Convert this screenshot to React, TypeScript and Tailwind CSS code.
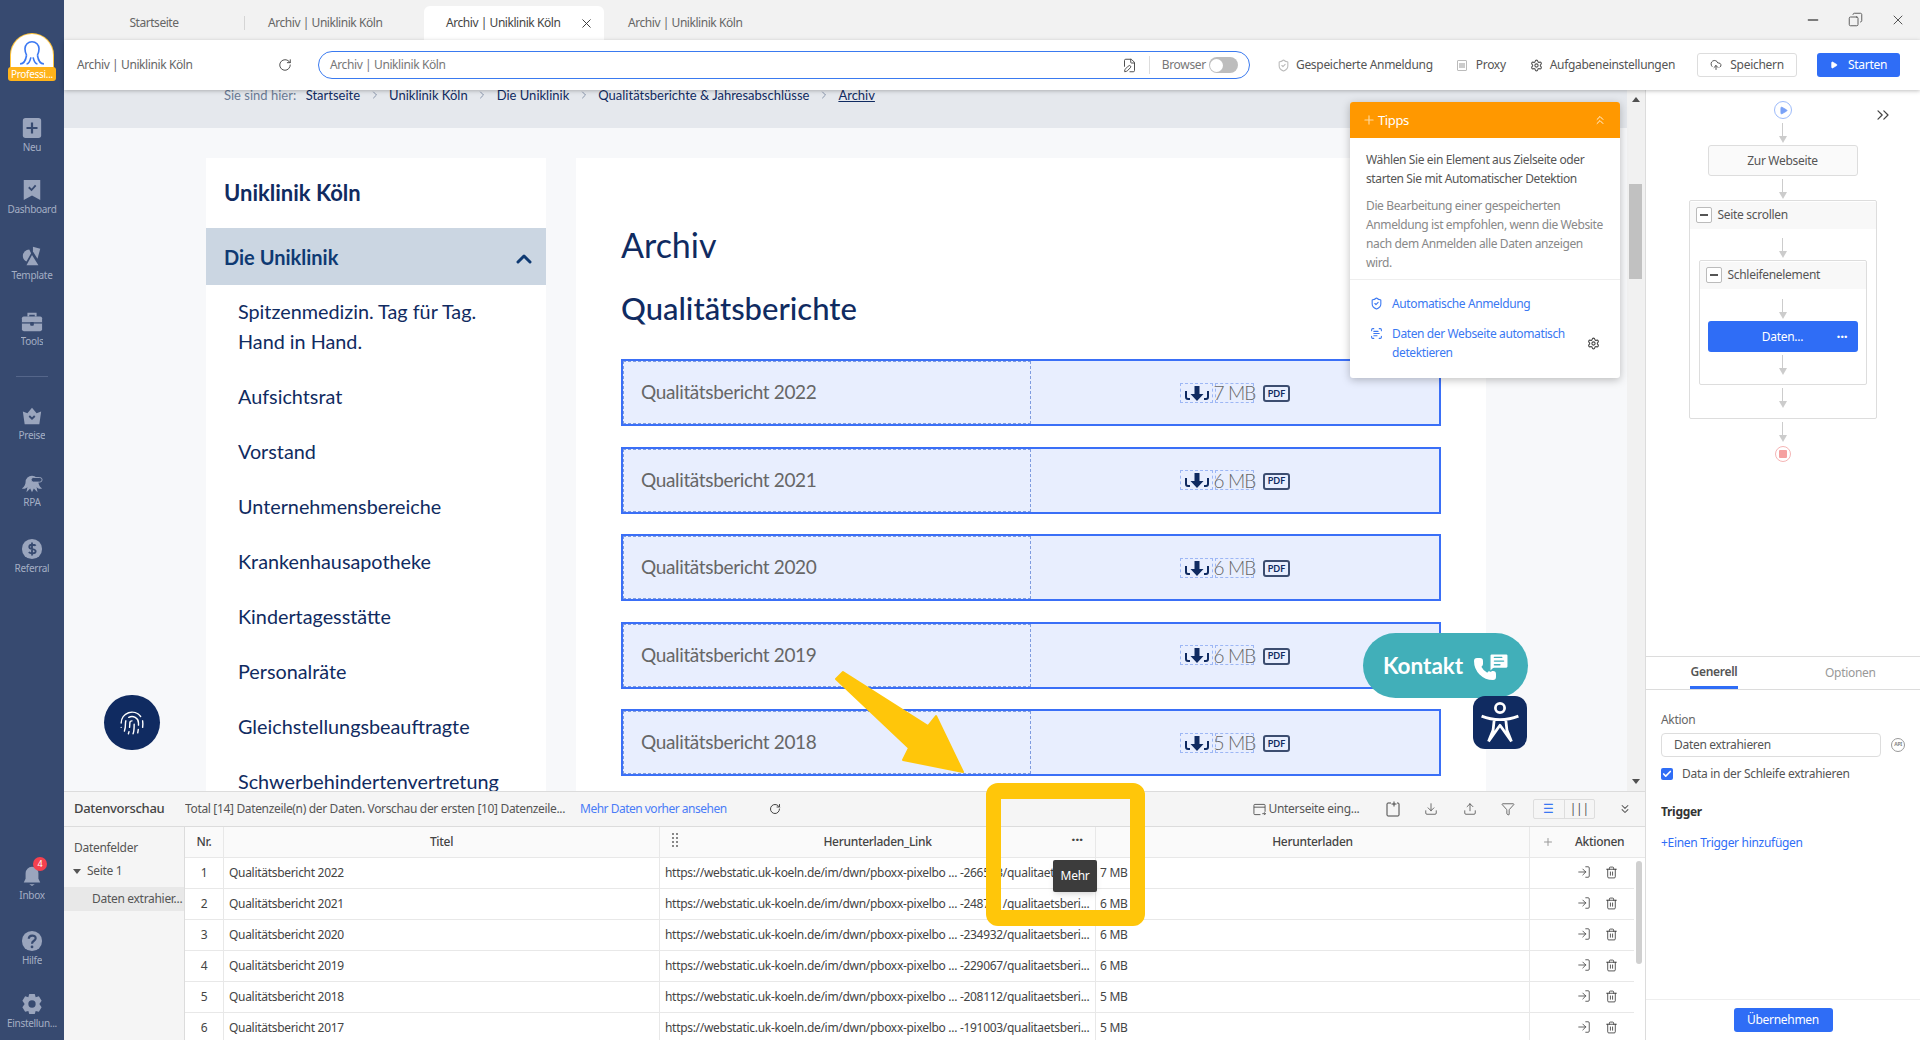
import {
  RotateCw,
  X,
  Minus,
  Copy,
  ShieldCheck,
  Settings,
  Play,
  ChevronsRight,
  ChevronsUp,
  ChevronsDown,
  ChevronUp,
  ChevronRight,
  CloudUpload,
  FilePen,
  Download,
  Upload,
  Plus,
  Check,
  Trash2,
  LogIn,
  Funnel,
  ScanText,
  Phone,
  MessageSquareText,
  Fingerprint,
} from 'lucide-react'

const navIconClass = 'w-[24px] h-[22px] text-[#9aa5bd]'

function NewIcon() {
  return (
    <svg viewBox="0 0 24 24" className={navIconClass}>
      <rect x="2" y="1" width="20" height="22" rx="3" fill="currentColor" />
      <path d="M12 6v12M6 12h12" stroke="#374a70" strokeWidth="2.4" />
    </svg>
  )
}

function BookmarkIcon() {
  return (
    <svg viewBox="0 0 24 24" className={navIconClass}>
      <path d="M3 1h18v22l-9-5-9 5z" fill="currentColor" />
      <path d="M8.500 9l3 3 4.500-5" stroke="#374a70" strokeWidth="2" fill="none" />
    </svg>
  )
}

function TemplateIcon() {
  return (
    <svg viewBox="0 0 24 24" className={navIconClass}>
      <path d="M13 2l8 2-3 11-5-8z" fill="currentColor" />
      <path d="M9 5a7 7 0 0 0-7 7c0 3 2 5 4 6l5-9z" fill="currentColor" />
      <path d="M12 11l7 11H6z" fill="currentColor" />
    </svg>
  )
}

function ToolsIcon() {
  return (
    <svg viewBox="0 0 24 24" className={navIconClass}>
      <path d="M8 6V3h8v3" stroke="currentColor" strokeWidth="2" fill="none" />
      <rect x="1" y="6" width="22" height="16" rx="2" fill="currentColor" />
      <path d="M1 13h22" stroke="#374a70" strokeWidth="1.4" />
      <rect x="10" y="12" width="4" height="4" rx="1" fill="#374a70" />
    </svg>
  )
}

function CrownIcon() {
  return (
    <svg viewBox="0 0 24 24" className={navIconClass}>
      <path d="M2 7l5 2 5-6 5 6 5-2-2 14H4z" fill="currentColor" />
      <path d="M9 12l3 3 3-3" stroke="#374a70" strokeWidth="2" fill="none" />
    </svg>
  )
}

function RpaIcon() {
  return (
    <svg viewBox="0 0 24 24" className={navIconClass}>
      <path d="M5 11a7 7 0 0 1 14 0c0 2 1 5 4 7-3 1-5 0-6-2l1 6-4-4-2 4-2-4-4 4 1-6c-1 2-4 3-6 2 3-2 4-5 4-7z" fill="currentColor" />
      <rect x="11" y="6" width="12" height="5" rx="2.500" fill="#374a70" stroke="currentColor" />
    </svg>
  )
}

function DollarIcon() {
  return (
    <svg viewBox="0 0 24 24" className={navIconClass}>
      <circle cx="12" cy="12" r="11" fill="currentColor" />
      <path d="M16 8.500c-1-1.500-7-2-7 1.200 0 3.300 7 1.500 7 4.800 0 3-6 2.700-7.500 1M12 5v14" stroke="#374a70" strokeWidth="2" fill="none" />
    </svg>
  )
}

function BellIcon() {
  return (
    <svg viewBox="0 0 24 24" className={navIconClass}>
      <path d="M12 2a7 7 0 0 0-7 7v6l-2 4h18l-2-4V9a7 7 0 0 0-7-7z" fill="currentColor" />
      <path d="M9 21h6l-3 2z" fill="currentColor" />
    </svg>
  )
}

function HelpIcon() {
  return (
    <svg viewBox="0 0 24 24" className={navIconClass}>
      <circle cx="12" cy="12" r="11" fill="currentColor" />
      <path d="M8.500 9.500c0-4.500 7.500-4.500 7.500-.5 0 3-4 2.500-4 6" stroke="#374a70" strokeWidth="2.400" fill="none" />
      <circle cx="12" cy="18.500" r="1.500" fill="#374a70" />
    </svg>
  )
}

function GearIcon() {
  return (
    <svg viewBox="0 0 24 24" className={navIconClass}>
      <path d="M9 1h6l1 3.500 3.500-1 3 5-2.500 3.500 2.500 3.500-3 5-3.500-1-1 3.500H9l-1-3.500-3.500 1-3-5L4 12 1.500 8.500l3-5 3.500 1z" fill="currentColor" />
      <circle cx="12" cy="12" r="4" fill="#374a70" />
    </svg>
  )
}

const topNav = [
  { label: 'Neu', icon: <NewIcon />, height: 'h-[62px]' },
  { label: 'Dashboard', icon: <BookmarkIcon />, height: 'h-[66px]' },
  { label: 'Template', icon: <TemplateIcon />, height: 'h-[66px]' },
  { label: 'Tools', icon: <ToolsIcon />, height: 'h-[65px]' },
]

const midNav = [
  { label: 'Preise', icon: <CrownIcon />, height: 'h-[67px]' },
  { label: 'RPA', icon: <RpaIcon />, height: 'h-[66px]' },
  { label: 'Referral', icon: <DollarIcon />, height: 'h-[40px]' },
]

function NavItem({ label, icon, badge, height = 'h-[65px]' }: { label: string; icon: React.ReactNode; badge?: string; height?: string }) {
  return (
    <div className={`relative flex w-full flex-col items-center ${height}`}>
      {icon}
      {badge && (
        <span className="absolute top-[-8px] left-[33px] flex h-[14px] w-[14px] items-center justify-center rounded-full bg-[#f5414f] text-[9px] text-white">
          {badge}
        </span>
      )}
      <span className="mt-[1px] max-w-[60px] truncate text-[10px] leading-[14px] text-[#a4aec4]">{label}</span>
    </div>
  )
}

function Sidebar() {
  return (
    <aside className="flex h-full w-[64px] shrink-0 flex-col items-center bg-[#374a70]">
      {/* Logo */}
      <div className="relative mt-[34px] h-[46px] w-[48px]">
        <div className="absolute left-[3px] top-0 flex h-[38px] w-[42px] items-start justify-center rounded-t-full bg-white ring-1 ring-[#ffc53d]">
          <svg viewBox="0 0 24 24" className="mt-[5px] h-[26px] w-[26px] text-[#3a78f2]" fill="none" stroke="currentColor" strokeWidth="1.500">
            <path d="M7 15c-1-2-1.500-4-1.500-6a6.500 6.500 0 0 1 13 0c0 2-.5 4-1.500 6" />
            <path d="M1 23c3 0 5-2 6-8M23 23c-3 0-5-2-6-8M7 23c2 0 3-2 4-6M17 23c-2 0-3-2-4-6" />
          </svg>
        </div>
        <span className="absolute bottom-[-1px] left-0 h-[14px] w-full truncate rounded-[3px] bg-[#ffb31a] px-[2px] text-center text-[10px] leading-[14px] text-white">
          Professi...
        </span>
      </div>

      <div className="mt-[37px] flex w-full flex-col">
        {topNav.map((item) => (
          <NavItem key={item.label} {...item} />
        ))}
      </div>
      <div className="mb-[28px] h-px w-[32px] bg-[#55668a]" />
      <div className="flex w-full flex-col">
        {midNav.map((item) => (
          <NavItem key={item.label} {...item} />
        ))}
      </div>

      <div className="mt-auto flex w-full flex-col">
        <NavItem label="Inbox" icon={<BellIcon />} badge="4" />
        <NavItem label="Hilfe" icon={<HelpIcon />} height="h-[63px]" />
        <NavItem label="Einstellun..." icon={<GearIcon />} height="h-[47px]" />
      </div>
    </aside>
  )
}

function TabBar() {
  return (
    <div className="flex h-[40px] shrink-0 items-end bg-[#f2f2f2] text-[12px] tracking-[-0.45px] text-[#666]">
      <div className="flex h-[34px] w-[180px] items-center justify-center">Startseite</div>
      <div className="flex h-[34px] w-[180px] items-center pl-[24px]">
        <span className="absolute ml-[-24px] h-[14px] w-px bg-[#d5d5d5]" />
        Archiv | Uniklinik Köln
      </div>
      <div className="flex h-[34px] w-[180px] items-center justify-between rounded-t-[6px] bg-white pl-[22px] pr-[10px] text-[#444]">
        Archiv | Uniklinik Köln
        <X className="h-[15px] w-[15px] text-[#333]" strokeWidth={1.500} />
      </div>
      <div className="flex h-[34px] w-[180px] items-center pl-[24px]">Archiv | Uniklinik Köln</div>
      <div className="ml-auto flex h-full items-start gap-[27px] pr-[14px] pt-[12px] text-[#555]">
        <Minus className="h-[16px] w-[16px]" />
        <Copy className="h-[15px] w-[15px] scale-x-[-1]" strokeWidth={1.500} />
        <X className="h-[16px] w-[16px]" strokeWidth={1.500} />
      </div>
    </div>
  )
}

function Toolbar() {
  return (
    <div className="relative z-10 flex h-[50px] shrink-0 items-center bg-white pl-[13px] pr-[20px] text-[12px] text-[#666] shadow-[0_1px_4px_rgba(0,0,0,0.25)]">
      <span className="w-[201px] tracking-[-0.4px]">Archiv | Uniklinik Köln</span>
      <RotateCw className="h-[14px] w-[14px] text-[#444]" strokeWidth={1.600} />
      <div className="ml-[26px] flex h-[28px] w-[932px] items-center rounded-full border border-[#3a7af0] pl-[11px] pr-[11px]">
        <span className="tracking-[-0.4px] text-[#777]">Archiv | Uniklinik Köln</span>
        <FilePen className="ml-auto h-[15px] w-[15px] text-[#444]" strokeWidth={1.500} />
        <span className="mx-[12px] h-[18px] w-px bg-[#ddd]" />
        <span className="text-[#777]">Browser</span>
        <span className="ml-[3px] flex h-[16px] w-[29px] items-center rounded-full bg-[#bdbdbd] pl-[1px]">
          <span className="h-[13px] w-[13px] rounded-full bg-white" />
        </span>
      </div>
      <ShieldCheck className="ml-[27px] h-[13px] w-[13px] text-[#bbb]" />
      <span className="ml-[6px] text-[#555]">Gespeicherte Anmeldung</span>
      <span className="ml-[24px] flex h-[11px] w-[10px] items-center justify-center rounded-[1px] border border-[#bbb]">
        <span className="h-[5px] w-[6px] bg-[#ccc]" />
      </span>
      <span className="ml-[9px] text-[#555]">Proxy</span>
      <Settings className="ml-[24px] h-[13px] w-[13px] text-[#555]" />
      <span className="ml-[7px] text-[#555]">Aufgabeneinstellungen</span>
      <button className="ml-[22px] flex h-[24px] w-[100px] items-center justify-center gap-[8px] rounded-[3px] border border-[#ddd] text-[#555]">
        <CloudUpload className="h-[12px] w-[12px]" />
        Speichern
      </button>
      <button className="ml-[20px] flex h-[24px] w-[83px] items-center justify-center gap-[10px] rounded-[3px] bg-[#2f6df6] text-white">
        <Play className="h-[8px] w-[8px] fill-white" />
        Starten
      </button>
    </div>
  )
}

const pageNav = [
  'Aufsichtsrat',
  'Vorstand',
  'Unternehmensbereiche',
  'Krankenhausapotheke',
  'Kindertagesstätte',
  'Personalräte',
  'Gleichstellungsbeauftragte',
  'Schwerbehindertenvertretung',
]

const reports = [
  { title: 'Qualitätsbericht 2022', size: '7 MB' },
  { title: 'Qualitätsbericht 2021', size: '6 MB' },
  { title: 'Qualitätsbericht 2020', size: '6 MB' },
  { title: 'Qualitätsbericht 2019', size: '6 MB' },
  { title: 'Qualitätsbericht 2018', size: '5 MB' },
]

function ReportRow({ title, size }: { title: string; size: string }) {
  return (
    <div className="flex h-[67px] shrink-0 border-2 border-[#3a6ff7] bg-[#e8eefe]">
      <div className="flex w-[408px] items-center border border-dashed border-[#7f9cdf] pl-[17px] text-[19px] tracking-[-0.35px] text-[#666]">
        {title}
      </div>
      <div className="flex flex-1 items-center justify-center">
        <span className="flex h-[20px] w-[33px] shrink-0 items-center justify-center border border-dashed border-[#9db7f5]">
          <svg viewBox="0 0 28 16" className="h-[16px] w-[28px]">
            <path d="M3 6v6a2 2 0 0 0 2 2h2M25 6v6a2 2 0 0 1-2 2h-2" stroke="#102b61" strokeWidth="2" fill="none" />
            <path d="M11.500 1h5v8h4l-6.500 7-6.500-7h4z" fill="#102b61" />
          </svg>
        </span>
        <span className="ml-[2px] flex h-[20px] w-[39px] shrink-0 items-center justify-center whitespace-nowrap border border-dashed border-[#9db7f5] text-[19px] font-light leading-none tracking-[-0.9px] text-[#666]">
          {size}
        </span>
        <span className="ml-[9px] mt-[2px] flex h-[17px] w-[27px] shrink-0 items-center justify-center rounded-[3px] border-2 border-[#3c4d70] text-[9px] font-bold text-[#102b61]">
          PDF
        </span>
      </div>
    </div>
  )
}

function WebPage() {
  return (
    <div className="relative flex min-h-0 flex-1 bg-[#f7f8fa] font-['Lato',sans-serif] tracking-normal">
      <div className="flex min-w-0 flex-1 flex-col overflow-hidden">
        <div className="flex h-[38px] shrink-0 items-start overflow-hidden bg-[#e5e8ed] pl-[160px] text-[13px] leading-[20px] text-[#102b61]">
          <div className="mt-[-5px] flex items-center gap-[8.500px] whitespace-nowrap">
            <span className="mr-[1px] text-[#6a7a94]">Sie sind hier:</span>
            <span>Startseite</span>
            <ChevronRight className="h-[12px] w-[12px] text-[#6a7a94]" strokeWidth={1.500} />
            <span>Uniklinik Köln</span>
            <ChevronRight className="h-[12px] w-[12px] text-[#6a7a94]" strokeWidth={1.500} />
            <span>Die Uniklinik</span>
            <ChevronRight className="h-[12px] w-[12px] text-[#6a7a94]" strokeWidth={1.500} />
            <span>Qualitätsberichte &amp; Jahresabschlüsse</span>
            <ChevronRight className="h-[12px] w-[12px] text-[#6a7a94]" strokeWidth={1.500} />
            <span className="underline">Archiv</span>
          </div>
        </div>
        <div className="flex min-h-0 flex-1 pl-[142px] pt-[30px]">
          <div className="w-[340px] shrink-0 overflow-hidden bg-white">
            <div className="flex h-[70px] items-center pb-[2px] pl-[18px] text-[22px] font-bold text-[#102b61]">Uniklinik Köln</div>
            <div className="flex h-[57px] items-center justify-between bg-[#cbd6e2] pl-[18px] pr-[10px] text-[20px] font-bold text-[#0f3a73]">
              Die Uniklinik
              <ChevronUp className="mt-[4px] h-[24px] w-[24px]" strokeWidth={3} />
            </div>
            <div className="pl-[32px] pt-[11px] text-[19.800px] leading-[30px] text-[#102b61]">
              <p className="mb-[25px] w-[260px]">Spitzenmedizin. Tag für Tag. Hand in Hand.</p>
              {pageNav.map((item) => (
                <p key={item} className="mb-[25px] whitespace-nowrap">
                  {item}
                </p>
              ))}
            </div>
          </div>
          <div className="ml-[30px] w-[910px] shrink-0 overflow-hidden bg-white px-[45px]">
            <h1 className="mt-[63px] h-[48px] text-[34px] leading-[48px] text-[#102b61]">Archiv</h1>
            <h2 className="mt-[17px] h-[44px] text-[31px] font-medium leading-[44px] text-[#102b61]">Qualitätsberichte</h2>
            <div className="mt-[29px] flex flex-col gap-[20.500px]">
              {reports.map((r) => (
                <ReportRow key={r.title} {...r} />
              ))}
            </div>
          </div>
        </div>
      </div>

      {/* Scrollbar */}
      <div className="flex w-[18px] shrink-0 flex-col items-center bg-[#f1f1f1] pr-px">
        <span className="mt-[7px] h-0 w-0 border-x-[4px] border-b-[5px] border-x-transparent border-b-[#505050]" />
        <span className="mt-[82px] h-[95px] w-[13px] bg-[#c1c1c1]" />
        <span className="mb-[7px] mt-auto h-0 w-0 border-x-[4px] border-t-[5px] border-x-transparent border-t-[#505050]" />
      </div>

      {/* Floating page widgets */}
      <div className="absolute left-[40px] top-[605px] flex h-[55px] w-[56px] items-center justify-center rounded-full bg-[#102b61]">
        <Fingerprint className="h-[26px] w-[26px] text-white" strokeWidth={1.300} />
      </div>
      <div className="absolute left-[1299px] top-[543px] flex h-[65px] w-[165px] items-center rounded-full bg-[#41afb9] pl-[20px] text-[22.500px] font-bold text-white">
        Kontakt
        <Phone className="ml-[10px] mt-[6px] h-[24px] w-[24px] shrink-0 fill-white" />
        <MessageSquareText className="ml-[-9px] mt-[-8px] h-[22px] w-[22px] shrink-0 fill-white text-[#41afb9]" strokeWidth={1.500} />
      </div>
      <div className="absolute left-[1409px] top-[606px] flex h-[53px] w-[54px] items-center justify-center rounded-[12px] bg-[#102b61]">
        <svg viewBox="0 0 40 40" className="h-[46px] w-[46px]" fill="none" stroke="white" strokeWidth="2.400" strokeLinejoin="round">
          <circle cx="20" cy="7" r="4" />
          <path d="M4 14c5 2 10 3 16 3s11-1 16-3M15 17l-1 9-4 10M25 17l1 9 4 10M10 36l10-14 10 14" />
        </svg>
      </div>

      <TipsCard />
    </div>
  )
}

function TipsCard() {
  return (
    <div className="absolute left-[1286px] top-[12px] w-[270px] rounded-[3px] bg-white font-['Noto_Sans',sans-serif] text-[12px] leading-[19px] tracking-[-0.38px] shadow-[0_2px_8px_rgba(0,0,0,0.25)]">
      <div className="flex h-[36px] items-center rounded-t-[3px] bg-[#ff9800] pl-[12px] pr-[13px] text-[13px] text-white">
        <Plus className="mr-[2px] h-[14px] w-[14px] text-[#ffd9a0]" />
        Tipps
        <ChevronsUp className="ml-auto h-[14px] w-[14px]" strokeWidth={1.500} />
      </div>
      <div className="border-b border-[#eee] pb-[7px] pl-[16px] pt-[12px]">
        <p className="whitespace-nowrap text-[#555]">
          Wählen Sie ein Element aus Zielseite oder
          <br />
          starten Sie mit Automatischer Detektion
        </p>
        <p className="mt-[8px] whitespace-nowrap text-[#888]">
          Die Bearbeitung einer gespeicherten
          <br />
          Anmeldung ist empfohlen, wenn die Website
          <br />
          nach dem Anmelden alle Daten anzeigen
          <br />
          wird.
        </p>
      </div>
      <div className="px-[20px] pb-[16px] pt-[14px] text-[#3a78f2]">
        <div className="flex items-center gap-[9px]">
          <ShieldCheck className="h-[13px] w-[13px]" />
          Automatische Anmeldung
        </div>
        <div className="mt-[11px] flex items-center">
          <ScanText className="mt-[3px] h-[13px] w-[13px] shrink-0 self-start" />
          <span className="ml-[9px] w-[190px]">Daten der Webseite automatisch detektieren</span>
          <Settings className="ml-auto h-[13px] w-[13px] text-[#444]" />
        </div>
      </div>
    </div>
  )
}

const rows = [
  { n: 1, title: 'Qualitätsbericht 2022', id: '266533', size: '7 MB' },
  { n: 2, title: 'Qualitätsbericht 2021', id: '248721', size: '6 MB' },
  { n: 3, title: 'Qualitätsbericht 2020', id: '234932', size: '6 MB' },
  { n: 4, title: 'Qualitätsbericht 2019', id: '229067', size: '6 MB' },
  { n: 5, title: 'Qualitätsbericht 2018', id: '208112', size: '5 MB' },
  { n: 6, title: 'Qualitätsbericht 2017', id: '191003', size: '5 MB' },
]

function DataPreview() {
  return (
    <div className="flex h-[249px] shrink-0 flex-col overflow-hidden border-t border-[#dcdcdc] bg-[#f5f5f5] text-[12px] text-[#555]">
      <div className="flex h-[35px] shrink-0 items-center border-b border-[#dcdcdc] pl-[10px] pr-[13px]">
        <span className="w-[111px] text-[13px] font-medium text-[#444]">Datenvorschau</span>
        <span className="w-[395px] truncate tracking-[-0.34px] text-[#555]">Total [14] Datenzeile(n) der Daten. Vorschau der ersten [10] Datenzeile...</span>
        <span className="tracking-[-0.5px] text-[#4a7cf7]">Mehr Daten vorher ansehen</span>
        <RotateCw className="ml-[42px] h-[12px] w-[12px] text-[#444]" />
        <span className="ml-auto flex items-center gap-[3px]">
          <svg viewBox="0 0 14 14" className="h-[13px] w-[13px]" fill="none" stroke="currentColor">
            <path d="M8 12.500H2a1 1 0 0 1-1-1v-9a1 1 0 0 1 1-1h10a1 1 0 0 1 1 1v7M1 4.500h12M10 11.500h3.500M12 10l1.500 1.500L12 13" />
          </svg>
          Unterseite eing...
        </span>
        <span className="ml-[26px] flex items-center gap-[24.500px] text-[#444]">
          <svg viewBox="0 0 14 16" className="h-[16px] w-[14px]" fill="none" stroke="currentColor">
            <path d="M5 2H2a1 1 0 0 0-1 1v11a1 1 0 0 0 1 1h10a1 1 0 0 0 1-1V3a1 1 0 0 0-1-1h-1M8 .500v5M5.500 3h5" />
          </svg>
          <Download className="h-[14px] w-[14px]" strokeWidth={1.300} />
          <Upload className="h-[14px] w-[14px]" strokeWidth={1.300} />
          <Funnel className="h-[14px] w-[14px]" strokeWidth={1.300} />
        </span>
        <span className="ml-[18px] flex h-[20px] w-[62px] items-center rounded-[2px] border border-[#ddd]">
          <span className="flex h-full flex-1 items-center justify-center border-r border-[#ddd] text-[#3a78f2]">☰</span>
          <span className="flex h-full flex-1 items-center justify-center text-[#555]">|||</span>
        </span>
        <ChevronsDown className="ml-[23px] h-[14px] w-[14px]" strokeWidth={1.800} />
      </div>
      <div className="flex min-h-0 flex-1">
        <div className="w-[120px] shrink-0 pt-[11px] text-[#555]">
          <div className="pl-[10px] leading-[20px]">Datenfelder</div>
          <div className="mt-[3px] flex items-center pl-[9px] leading-[20px]">
            <span className="h-0 w-0 border-x-[4px] border-t-[5px] border-x-transparent border-t-[#555]" />
            <span className="ml-[6px]">Seite 1</span>
          </div>
          <div className="mt-[6px] h-[24px] truncate bg-[#e8e8e8] pl-[28px] leading-[24px]">Daten extrahier...</div>
        </div>
        <div className="relative min-w-0 flex-1 border-l border-[#dcdcdc] bg-white">
          <div className="flex h-[31px] items-center border-b border-[#e8e8e8] bg-[#fafafa] font-medium text-[#444]">
            <div className="flex h-full w-[39px] items-center justify-center border-r border-[#e8e8e8]">Nr.</div>
            <div className="flex h-full w-[436px] items-center justify-center border-r border-[#e8e8e8]">Titel</div>
            <div className="relative flex h-full w-[436px] items-center justify-center border-r border-[#e8e8e8]">
              <span className="absolute left-[12px] top-[6px] grid grid-cols-2 gap-[2px]">
                {[0, 1, 2, 3, 4, 5, 6, 7].map((i) => (
                  <span key={i} className="h-[2px] w-[2px] bg-[#888]" />
                ))}
              </span>
              Herunterladen_Link
              <span className="absolute right-[12px] top-[5px] text-[15px] font-bold leading-[14px]">···</span>
            </div>
            <div className="flex h-full w-[434px] items-center justify-center border-r border-[#e8e8e8]">Herunterladen</div>
            <div className="flex h-full w-[36px] items-center justify-center text-[#999]">
              <Plus className="h-[12px] w-[12px]" />
            </div>
            <div className="pl-[9px]">Aktionen</div>
          </div>
          {rows.map((r) => (
            <div key={r.n} className="flex h-[31px] w-[1449px] items-center border-b border-[#e8e8e8] text-[#444]">
              <div className="flex h-full w-[39px] items-center justify-center border-r border-[#e8e8e8]">{r.n}</div>
              <div className="flex h-full w-[436px] items-center border-r border-[#e8e8e8] pl-[5px]">{r.title}</div>
              <div className="flex h-full w-[436px] items-center whitespace-nowrap border-r border-[#e8e8e8] pl-[5px]">
                https://webstatic.uk-koeln.de/im/dwn/pboxx-pixelbo ... -{r.id}/qualitaetsberi...
              </div>
              <div className="flex h-full w-[434px] items-center border-r border-[#e8e8e8] pl-[4px]">{r.size}</div>
              <div className="ml-auto flex items-center gap-[14px] pb-[2px] pr-[16px] text-[#333]">
                <LogIn className="h-[14px] w-[14px]" strokeWidth={1.300} />
                <Trash2 className="h-[13px] w-[13px]" strokeWidth={1.500} />
              </div>
            </div>
          ))}
          <span className="absolute left-[1451px] top-[34px] h-[103px] w-[6px] rounded-full bg-[#d0d0d0]" />
        </div>
      </div>
    </div>
  )
}

function FlowArrow({ className = 'h-[20px]' }: { className?: string }) {
  return (
    <div className={`flex shrink-0 flex-col items-center ${className}`}>
      <span className="w-px flex-1 bg-[#ccc]" />
      <span className="h-0 w-0 border-x-[4px] border-t-[7px] border-x-transparent border-t-[#ccc]" />
    </div>
  )
}

function GroupHeader({ label }: { label: string }) {
  return (
    <div className="flex h-[27px] items-center gap-[6px] bg-[#f8f8f8] pb-[2px] pl-[6px] text-[12px] text-[#555]">
      <span className="flex h-[16px] w-[16px] items-center justify-center rounded-[2px] border border-[#bbb] bg-white">
        <span className="h-[2px] w-[8px] bg-[#555]" />
      </span>
      {label}
    </div>
  )
}

function RightPanel() {
  return (
    <div className="flex h-full w-[275px] shrink-0 flex-col border-l border-[#dcdcdc] bg-white text-[12px] text-[#555]">
      {/* Flow diagram */}
      <div className="relative flex h-[566px] shrink-0 flex-col items-center pr-[1px] pt-[11px]">
        <ChevronsRight className="absolute left-[227px] top-[15px] h-[20px] w-[20px] text-[#444]" strokeWidth={1.500} />
        <span className="flex h-[18px] w-[18px] items-center justify-center rounded-full border border-[#9dbbfa]">
          <Play className="ml-[1px] h-[9px] w-[9px] fill-[#7aa2f7] text-[#7aa2f7]" />
        </span>
        <FlowArrow className="mt-[4px] h-[20px]" />
        <div className="mt-[2px] flex h-[31px] w-[150px] shrink-0 items-center justify-center rounded-[3px] border border-[#ddd] bg-[#fafafa]">
          Zur Webseite
        </div>
        <FlowArrow className="mt-[3px] h-[20px]" />
        <div className="mt-[1px] h-[219px] w-[188px] shrink-0 rounded-[2px] border border-[#ddd] pt-px">
          <GroupHeader label="Seite scrollen" />
          <div className="flex flex-col items-center">
            <FlowArrow className="mt-[9px] h-[20px]" />
            <div className="mt-[2px] h-[125px] w-[168px] shrink-0 rounded-[2px] border border-[#ddd] pt-px">
              <GroupHeader label="Schleifenelement" />
              <div className="flex flex-col items-center">
                <FlowArrow className="mt-[10px] h-[20px]" />
                <div className="relative mt-[2px] flex h-[31px] w-[150px] items-center justify-center rounded-[3px] bg-[#2f6df6] text-white">
                  Daten...
                  <span className="absolute right-[10px] text-[14px] font-bold leading-none">···</span>
                </div>
                <FlowArrow className="mt-[3px] h-[20px]" />
              </div>
            </div>
            <FlowArrow className="mt-[3px] h-[20px]" />
          </div>
        </div>
        <FlowArrow className="mt-[3px] h-[20px]" />
        <span className="mt-[4px] flex h-[16px] w-[16px] items-center justify-center rounded-full border border-[#f5b5b5]">
          <span className="h-[8px] w-[8px] rounded-[1px] bg-[#f5a0a0]" />
        </span>
      </div>

      {/* Properties */}
      <div className="flex h-[34px] shrink-0 border-y border-[#dcdcdc] pl-[44px]">
        <span className="flex h-full w-[48px] items-center justify-center border-b-[3px] border-[#2f6df6] font-semibold text-[#555]">Generell</span>
        <span className="ml-[87px] flex items-center text-[#999]">Optionen</span>
      </div>
      <div className="flex-1 px-[15px] pt-[23px]">
        <div className="leading-[14px] text-[#666]">Aktion</div>
        <div className="mt-[6px] flex items-center">
          <div className="flex h-[24px] w-[223px] items-center rounded-[4px] border border-[#ddd] pl-[12px]">Daten extrahieren</div>
          <span className="ml-[10px] flex h-[14px] w-[14px] items-center justify-center rounded-full border border-[#999] text-[5px] font-bold text-[#888]">API</span>
        </div>
        <label className="mt-[8px] flex items-center gap-[9px]">
          <span className="flex h-[12px] w-[12px] items-center justify-center rounded-[2px] bg-[#2f6df6]">
            <Check className="h-[10px] w-[10px] text-white" strokeWidth={4} />
          </span>
          Data in der Schleife extrahieren
        </label>
        <div className="mt-[20px] font-bold text-[#333]">Trigger</div>
        <div className="mt-[13px] text-[#2f6df6]">+Einen Trigger hinzufügen</div>
      </div>
      <div className="flex h-[41px] shrink-0 items-center justify-center border-t border-[#eee]">
        <button className="h-[24px] w-[99px] rounded-[3px] bg-[#2f6df6] text-white">Übernehmen</button>
      </div>
    </div>
  )
}

export default function App() {
  return (
    <div className="relative flex h-[1040px] w-[1920px] overflow-hidden bg-white font-['Noto_Sans',sans-serif] tracking-[-0.3px]">
      <Sidebar />
      <div className="flex min-w-0 flex-1 flex-col">
        <TabBar />
        <Toolbar />
        <div className="flex min-h-0 flex-1">
          <div className="flex min-w-0 flex-1 flex-col">
            <WebPage />
            <DataPreview />
          </div>
          <RightPanel />
        </div>
      </div>

      {/* Annotation drawn over the screenshot */}
      <svg viewBox="0 0 1920 1040" className="pointer-events-none absolute inset-0 h-[1040px] w-[1920px]">
        <path d="M843 672 L928 726 L936 716 L963 772 L903 760 L909 748 L836 679 Z" fill="#ffc60a" stroke="#ffc60a" strokeWidth="2" strokeLinejoin="round" />
      </svg>
      <div className="pointer-events-none absolute left-[986px] top-[783px] h-[143px] w-[159px] rounded-[12px] border-x-[15px] border-y-[16px] border-[#ffc60a]" />
      <div className="absolute left-[1053px] top-[860px] flex h-[32px] w-[44px] items-center justify-center rounded-[2px] bg-[#3c3c3c] text-[12px] text-white shadow-md">
        Mehr
      </div>
    </div>
  )
}
